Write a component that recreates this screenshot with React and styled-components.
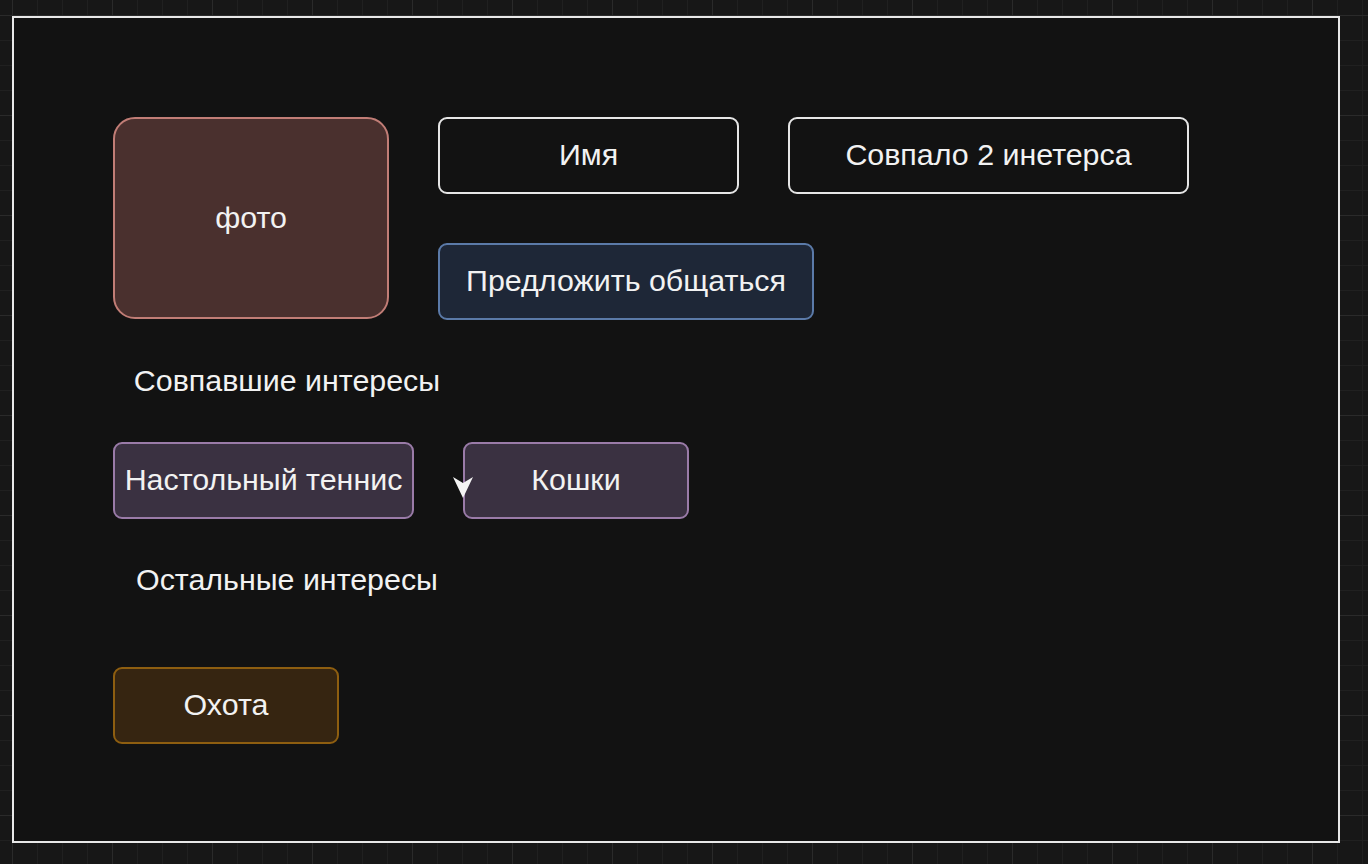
import React from "react";
import styled, { createGlobalStyle } from "styled-components";

const GlobalStyle = createGlobalStyle`
	html, body {
		margin: 0;
		padding: 0;
	}

	body {
		min-height: 864px;
		background-color: #171717;
		background-image:
			linear-gradient(to right, #2a2a2a 1px, transparent 1px),
			linear-gradient(to bottom, #2a2a2a 1px, transparent 1px),
			linear-gradient(to right, #202020 1px, transparent 1px),
			linear-gradient(to bottom, #202020 1px, transparent 1px);
		background-size: 100px 100px, 100px 100px, 25px 25px, 25px 25px;
		background-position: 12px 15px, 12px 15px, 12px 15px, 12px 15px;
		font-family: "Liberation Sans", Arial, Helvetica, sans-serif;
		color: #f2f2f2;
	}
`;

const tones = {
	photo: { bg: "#4a302e", border: "#c17d76" },
	plain: { bg: "#121212", border: "#e6e6e6" },
	action: { bg: "#1e2737", border: "#5b7aa8" },
	match: { bg: "#3a3141", border: "#9a7ba8" },
	other: { bg: "#362511", border: "#8e5e10" },
};

const App = () => {
	return (
		<>
			<GlobalStyle />
			<Frame>
				<TopRow>
					<Photo>фото</Photo>
					<InfoColumn>
						<InfoRow>
							<Tag tone="plain" w={301}>
								Имя
							</Tag>
							<Tag tone="plain" w={401}>
								Совпало 2 инетерса
							</Tag>
						</InfoRow>
						<Tag tone="action" w={376}>
							Предложить общаться
						</Tag>
					</InfoColumn>
				</TopRow>

				<Label>Совпавшие интересы</Label>

				<TagRow>
					<Tag tone="match" w={301}>
						Настольный теннис
					</Tag>
					<Tag tone="match" w={226}>
						<Arrow viewBox="0 0 20 22">
							<path d="M0 0 L10 21 L20 0 L10 6 Z" fill="#f4f4f4" />
						</Arrow>
						Кошки
					</Tag>
				</TagRow>

				<Label>Остальные интересы</Label>

				<TagRow $gap={0} $top={57}>
					<Tag tone="other" w={226}>
						Охота
					</Tag>
				</TagRow>
			</Frame>
		</>
	);
};

export default App;

const Frame = styled.div`
	box-sizing: border-box;
	margin: 16px 0 0 12px;
	width: 1328px;
	height: 827px;
	border: 2px solid #e8e8e8;
	background-color: #121212;
	padding: 99px 0 0 99px;
	display: flex;
	flex-direction: column;
`;

const TopRow = styled.div`
	display: flex;
	gap: 49px;
`;

const Photo = styled.div`
	box-sizing: border-box;
	width: 276px;
	height: 202px;
	border-radius: 22px;
	border: 2px solid ${tones.photo.border};
	background-color: ${tones.photo.bg};
	display: flex;
	align-items: center;
	justify-content: center;
	font-size: 30.4px;
	padding-bottom: 2px;
`;

const InfoColumn = styled.div`
	display: flex;
	flex-direction: column;
	gap: 49px;
`;

const InfoRow = styled.div`
	display: flex;
	gap: 49px;
`;

const Tag = styled.div`
	position: relative;
	box-sizing: border-box;
	width: ${(p) => p.w}px;
	height: 77px;
	border-radius: 9px;
	border: 2px solid ${(p) => tones[p.tone].border};
	background-color: ${(p) => tones[p.tone].bg};
	display: flex;
	align-items: center;
	justify-content: center;
	font-size: 30.4px;
	white-space: nowrap;
	padding-bottom: 2px;
`;

const Label = styled.div`
	width: 300px;
	height: 60px;
	margin: 31px 0 0 24px;
	display: flex;
	align-items: center;
	justify-content: center;
	font-size: 30.4px;
	white-space: nowrap;
	padding-bottom: 2px;
	box-sizing: border-box;
`;

const TagRow = styled.div`
	display: flex;
	gap: ${(p) => p.$gap ?? 49}px;
	margin-top: ${(p) => p.$top ?? 31}px;
`;

const Arrow = styled.svg`
	position: absolute;
	left: -12px;
	top: 33px;
	width: 20px;
	height: 22px;
`;
